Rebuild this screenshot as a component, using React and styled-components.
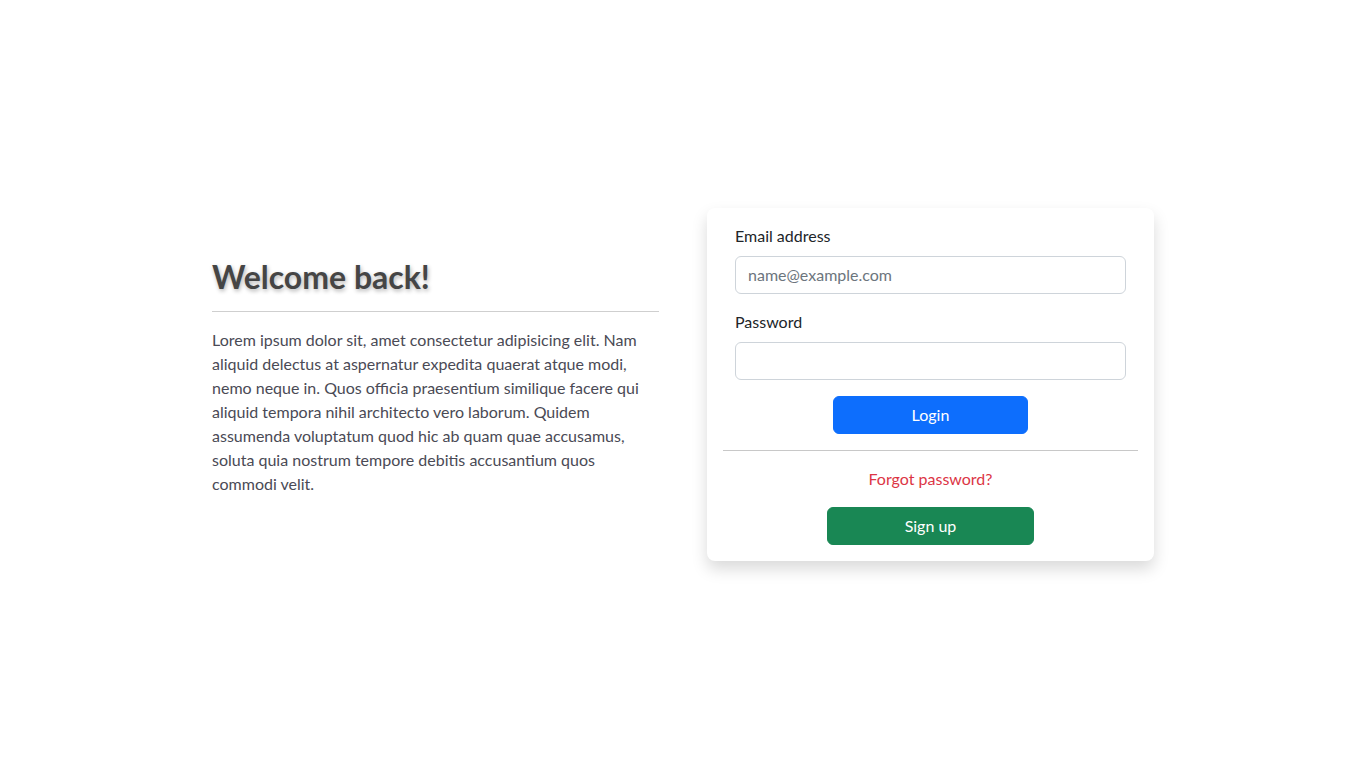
import styled, { createGlobalStyle } from "styled-components";

const GlobalStyle = createGlobalStyle`
    * { box-sizing: border-box; }
    body {
        margin: 0;
        background: #fff;
        font-family: Lato, "Noto Sans", sans-serif;
        font-size: 16px;
        line-height: 1.5;
        color: #212529;
    }
`;

const App = () => {
    return (
        <>
            <GlobalStyle />
            <Page>
                <Intro>
                    <Title>Welcome back!</Title>
                    <Rule />
                    <Text>
                        Lorem ipsum dolor sit, amet consectetur adipisicing elit. Nam
                        aliquid delectus at aspernatur expedita quaerat atque modi,
                        nemo neque in. Quos officia praesentium similique facere qui
                        aliquid tempora nihil architecto vero laborum. Quidem
                        assumenda voluptatum quod hic ab quam quae accusamus,
                        soluta quia nostrum tempore debitis accusantium quos
                        commodi velit.
                    </Text>
                </Intro>
                <Card>
                    <Form onSubmit={(e) => e.preventDefault()}>
                        <Label htmlFor="email">Email address</Label>
                        <Input id="email" type="email" placeholder="name@example.com" />
                        <Label htmlFor="password">Password</Label>
                        <Input id="password" type="password" />
                        <Button type="submit" color="#0d6efd">Login</Button>
                    </Form>
                    <CardRule />
                    <Forgot href="#">Forgot password?</Forgot>
                    <Button type="button" color="#198754">Sign up</Button>
                </Card>
            </Page>
        </>
    );
};

const Page = styled.main`
    min-height: 100vh;
    display: flex;
    justify-content: center;
    align-items: center;
    gap: 48px;
`;

const Intro = styled.section`
    width: 447px;
    margin-bottom: 14px;
    display: flex;
    flex-direction: column;
`;

const Title = styled.h2`
    margin: 0 0 6px;
    font-size: 32px;
    font-weight: 700;
    line-height: 1.2;
    color: #454545;
    text-shadow: 1px 2px 4px rgba(0, 0, 0, 0.3);
`;

const Rule = styled.hr`
    width: 100%;
    margin: 8px 0 16px;
    border: 0;
    border-top: 1px solid #cfcfcf;
`;

const Text = styled.p`
    margin: 0;
    color: #4a4a55;
    line-height: 24px;
`;

const Card = styled.div`
    width: 447px;
    padding: 16px;
    background: #fff;
    border-radius: 8px;
    box-shadow: 0 8px 16px rgba(0, 0, 0, 0.15);
    display: flex;
    flex-direction: column;
    align-items: center;
`;

const Form = styled.form`
    width: 100%;
    padding: 0 12px;
    display: flex;
    flex-direction: column;
    align-items: center;
`;

const Label = styled.label`
    align-self: stretch;
    margin-bottom: 8px;
    color: #212529;
`;

const Input = styled.input`
    align-self: stretch;
    height: 38px;
    margin-bottom: 16px;
    padding: 6px 12px;
    font: inherit;
    color: #212529;
    border: 1px solid #ced4da;
    border-radius: 6px;
    outline: none;
    &::placeholder { color: #6c757d; }
`;

const Button = styled.button`
    width: 50%;
    height: 38px;
    padding: 6px 12px;
    font: inherit;
    color: #fff;
    background: ${(p) => p.color};
    border: 1px solid ${(p) => p.color};
    border-radius: 6px;
    cursor: pointer;
`;

const CardRule = styled.hr`
    width: 100%;
    margin: 16px 0;
    border: 0;
    border-top: 1px solid #c8c8c8;
`;

const Forgot = styled.a`
    margin-bottom: 16px;
    color: #dc3545;
    text-decoration: none;
`;

export default App;
